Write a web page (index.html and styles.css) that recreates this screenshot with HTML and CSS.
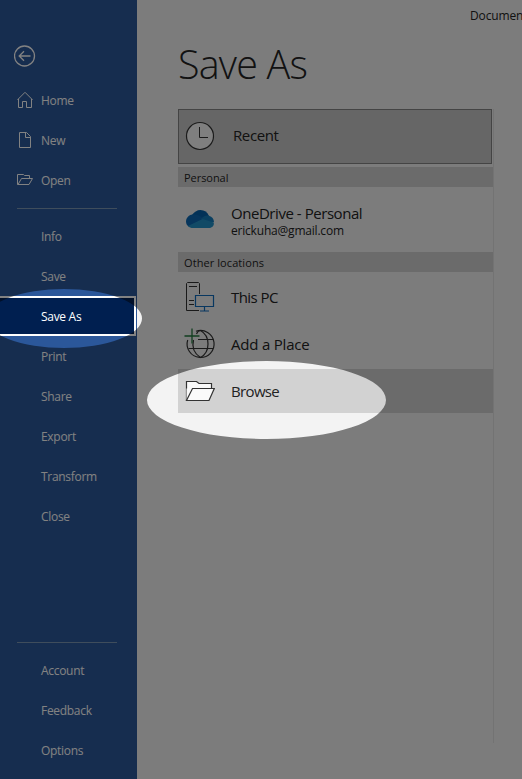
FILE: index.html
```html
<!DOCTYPE html>
<html lang="en">
<head>
<meta charset="utf-8">
<title>Save As</title>
<link rel="stylesheet" href="styles.css">
</head>
<body>
<div class="app">
  <nav class="sidebar">
    <a class="back"><svg width="22" height="22" viewBox="0 0 22 22"><circle cx="10.500" cy="11" r="10"/><path d="M16.500 11H5.500M10 6.200L5.200 11l4.800 4.800"/></svg></a>
    <a class="item"><svg width="17" height="18" viewBox="0 0 17 18"><path d="M.5 8.800L8 1.300 15.500 8.800M1.500 8V16.500H5.500V10.500H9.500V16.500H14.500V8"/></svg><span>Home</span></a>
    <a class="item"><svg width="17" height="18" viewBox="0 0 17 18"><path d="M2.500 1.500H9.500L13.500 5.500V16.500H2.500ZM8.500 1.500V6.500H13.500"/></svg><span>New</span></a>
    <a class="item"><svg width="17" height="18" viewBox="0 0 17 18"><path d="M.5 13.500V3.500H6.500L7.500 4.500H12.500V7.500M.5 13.500H12L15.500 7.500H4.500L1 13.500"/></svg><span>Open</span></a>
    <div class="rule"></div>
    <a class="item">Info</a>
    <a class="item">Save</a>
    <a class="item selected">Save As</a>
    <a class="item">Print</a>
    <a class="item">Share</a>
    <a class="item">Export</a>
    <a class="item">Transform</a>
    <a class="item">Close</a>
    <div class="spacer"></div>
    <div class="rule"></div>
    <a class="item">Account</a>
    <a class="item">Feedback</a>
    <a class="item">Options</a>
  </nav>
  <main class="main">
    <div class="doc-title">Documen</div>
    <h1>Save As</h1>
    <section class="places">
      <div class="place recent">
        <svg width="30" height="30" viewBox="0 0 30 30"><circle class="paper ink" cx="15" cy="15" r="13.500"/><path class="ink thin" d="M14.500 6V16.500H23"/></svg>
        <span>Recent</span>
      </div>
      <h2>Personal</h2>
      <div class="place onedrive">
        <svg width="30" height="30" viewBox="0 0 30 30">
          <path fill="#0360aa" d="M7 10C9 7 12 5 15.500 5C19.500 5 22.500 7 24 11L17 17L7 13Z"/>
          <path fill="#0a68b4" d="M7.500 9.500C3.500 10 1 13 1 16.500C1 18.500 2 20.500 3.500 21.500L19 14C15.500 11 12 9.200 7.500 9.500Z"/>
          <path fill="#127cbd" d="M16 13.500L19 11.500C21 10.500 23 10.500 24 10.700C27 11.500 29 14 29 17L25 18Z"/>
          <path fill="#2090c8" d="M3 21L17.500 14L28.700 17.500C29.500 20.500 27 23 24 23H8C6 23 4.200 22.500 3 21Z"/>
        </svg>
        <span class="account"><span>OneDrive - Personal</span><small>erickuha@gmail.com</small></span>
      </div>
      <h2 class="other">Other locations</h2>
      <div class="place pc">
        <svg width="30" height="30" viewBox="0 0 30 30"><path class="ink thin" d="M14 28.500H1.500V1.500L2.500 .5H13.500L14.500 1.500V12M4 4.500H12M4 18.500H9M4 22.500H9"/><path class="blue" d="M10.500 13.500H28.500V24.500H10.500ZM19.500 25V29M15 29H24"/></svg>
        <span>This PC</span>
      </div>
      <div class="place add">
        <svg width="32" height="32" viewBox="0 0 32 32"><g class="ink"><path d="M12 3.300A13.500 13.500 0 1 1 3.700 12"/><path d="M12.500 6C13.500 3.500 15 2.500 16.500 2.500C26.500 8 26.500 24 16.500 29.500C9.500 25 8 18 9.500 12M14 11.500H29.300M4.500 20.500H29"/></g><path class="green" d="M8 .5V15.500M.5 8H15.500"/></svg>
        <span>Add a Place</span>
      </div>
      <div class="place browse">
        <svg width="30" height="22" viewBox="0 0 30 22"><path class="ink folder" d="M1.500 20.500V1.500H11.500L14 3.500H26.500V8.500"/><path class="ink folder" d="M1.500 20.500V8.500H7.500Z"/><path class="ink folder" d="M1.500 20.500H24L29.300 8.500H7.500Z"/></svg>
        <span>Browse</span>
      </div>
    </section>
  </main>
  <svg class="shade" width="522" height="779" viewBox="0 0 522 779"><path fill-rule="evenodd" d="M0 0H522V779H0ZM147 400A119.500 39 0 1 0 386 400A119.500 39 0 1 0 147 400ZM-14 318.500A78 29.500 0 1 0 142 318.500A78 29.500 0 1 0 -14 318.500Z"/></svg>
</div>
</body>
</html>
```
FILE: styles.css
```css
* { box-sizing: border-box; }
body { margin: 0; font-family: "Open Sans", "Noto Sans", sans-serif; }
.app { position: relative; display: flex; width: 522px; height: 779px; overflow: hidden; background: #f3f3f3; }
.sidebar { display: flex; flex-direction: column; flex: none; width: 137px; padding: 45px 0 9px; background: #2b579a; color: #fff; }
.sidebar svg { fill: none; stroke: #fff; stroke-width: 1; flex: none; }
.back { display: block; height: 35px; padding-left: 14px; }
.back svg { display: block; stroke-width: 1.3; }
.item { display: flex; align-items: center; flex: none; height: 40px; padding-left: 41px; font-size: 12px; letter-spacing: -.3px; white-space: nowrap; }
.item svg { margin: 0 7px 0 -24px; }
.rule { flex: none; width: 100px; height: 1px; margin: 8px 0 7px 17px; background: #7c97b4; }
.spacer { flex: 1; }
.selected { width: 138px; margin-left: -2px; border: 2px solid #fff; background: #001f50; }
.main { flex: 1; min-width: 0; padding-left: 41px; color: #222; }
.doc-title { margin-left: 292px; padding-top: 8px; height: 40px; font-size: 12px; line-height: 16px; letter-spacing: -.15px; white-space: nowrap; }
h1 { margin: 0; height: 69px; font-size: 39.5px; font-weight: 300; line-height: 48px; letter-spacing: -.8px; }
.places { width: 316px; height: 634px; border-right: 1px solid #e1e1e1; }
.place { display: flex; align-items: center; height: 47px; padding-left: 7px; font-size: 15px; letter-spacing: -.45px; }
.place svg { flex: none; margin-right: 16px; }
.recent { width: 314px; height: 55px; margin-bottom: 3px; border: 1px solid #858585; background: #c8c8c8; letter-spacing: -.4px; }
.recent span { padding-bottom: 3px; }
.recent svg { margin-right: 18px; margin-left: -1px; margin-bottom: 2px; }
h2 { margin: 0; height: 20px; padding-left: 6px; background: #d2d2d2; font-size: 11px; font-weight: 400; line-height: 21px; letter-spacing: -.05px; }
.other { letter-spacing: .08px; }
.onedrive { height: 65px; }
.account { display: block; line-height: 18px; padding-top: 4px; }
.account span, .account small { display: block; }
.account small { font-size: 12px; letter-spacing: -.2px; }
.pc { padding-top: 2px; letter-spacing: -.55px; }
.add { padding-top: 2px; letter-spacing: -.2px; }
.add svg { margin-left: -1px; margin-right: 15px; }
.browse { height: 44px; background: #d2d2d2; margin-top: 3px; letter-spacing: -.65px; }
.ink, .blue, .green { fill: none; stroke: #333; stroke-width: 1.2; }
.ink.thin { stroke-width: 1; }
.ink.paper { fill: #fafafa; }
.ink.folder { fill: #fafafa; }
.ink.folder:nth-child(2) { stroke: none; }
.blue { stroke: #0f6cbd; }
.green { stroke: #21793d; stroke-width: 1.300; }
.shade { position: absolute; inset: 0; fill: rgba(3, 3, 3, .495); }
```
